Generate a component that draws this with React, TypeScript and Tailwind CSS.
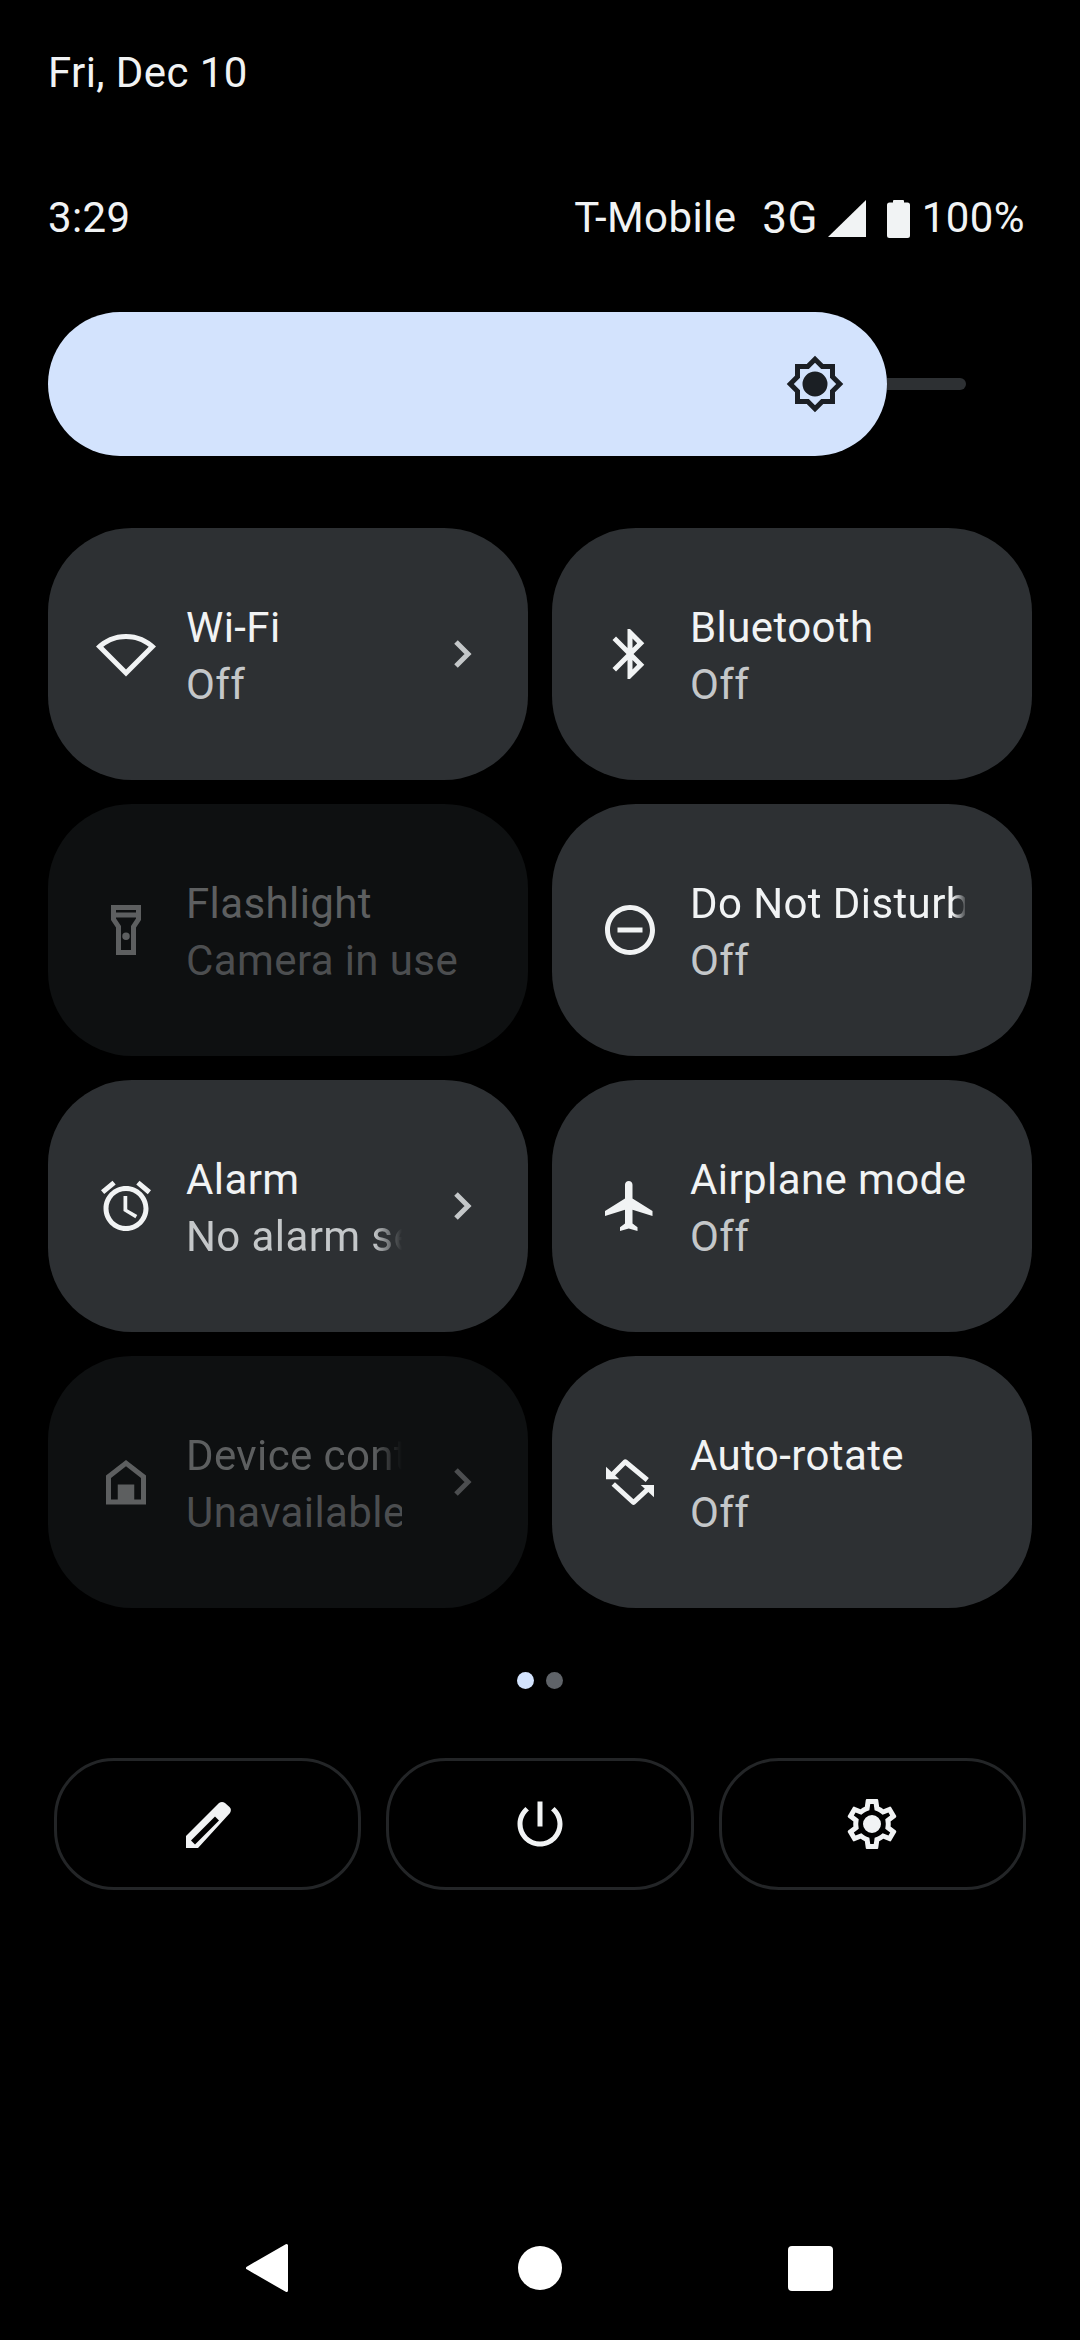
import React from "react";

const Ico = ({ d, cls, rule }: { d: string; cls: string; rule?: "evenodd" | "nonzero" }) => (
  <svg viewBox="0 0 24 24" className={`w-[60px] h-[60px] shrink-0 ${cls}`}>
    <path d={d} fill="currentColor" fillRule={rule ?? "nonzero"} />
  </svg>
);

const WIFI = "M12 6c3.33 0 6.49 1.08 9.08 3.07L12 18.17 2.92 9.07C5.51 7.08 8.67 6 12 6m0-2C7.31 4 3.07 5.9 0 8.98L12 21 24 8.98C20.93 5.9 16.69 4 12 4z";
const BT = "M17.71 7.71L12 2h-1v7.59L6.41 5 5 6.41 10.59 12 5 17.59 6.41 19 11 14.41V22h1l5.71-5.71-4.3-4.29 4.3-4.29zM13 5.83l1.88 1.88L13 9.59V5.83zm1.88 10.46L13 18.17v-3.76l1.88 1.88z";
const FLASH = "M18 2H6v6l2 3v11h8V11l2-3V2zm-2 2v1H8V4h8zm-2 6.4V20h-4v-9.61l-2-3V7h8v.39l-2 3.01zM12 13a1.5 1.5 0 100 3 1.5 1.5 0 000-3z";
const DND = "M7 11v2h10v-2H7zm5-9C6.48 2 2 6.48 2 12s4.48 10 10 10 10-4.48 10-10S17.52 2 12 2zm0 18c-4.41 0-8-3.59-8-8s3.59-8 8-8 8 3.59 8 8-3.59 8-8 8z";
const ALARM = "M22 5.72l-4.6-3.86-1.29 1.53 4.6 3.86L22 5.72zM7.88 3.39L6.6 1.86 2 5.71l1.29 1.53 4.59-3.85zM12.5 8H11v6l4.75 2.85.75-1.23-4-2.37V8zM12 4c-4.97 0-9 4.03-9 9s4.03 9 9 9c4.97 0 9-4.03 9-9s-4.03-9-9-9zm0 16c-3.87 0-7-3.13-7-7s3.13-7 7-7 7 3.13 7 7-3.13 7-7 7z";
const PLANE = "M21 16v-2l-8-5V3.5c0-.83-.67-1.5-1.5-1.5S10 2.67 10 3.5V9l-8 5v2l8-2.5V19l-2 1.5V22l3.5-1 3.5 1v-1.5L13 19v-5.5l8 2.5z";
const HOME = "M12 3.2L4 9.4V21h16V9.4L12 3.2zM12 5.7l6 4.7V19h-2.7v-6H8.7v6H6v-8.6l6-4.7z";
const EDIT = "M3.2 21.6V16.8L16.4 3.6Q17.6 2.8 18.8 3.6L20.6 5.2Q21.6 6.2 20.8 7.6L8 21.6ZM5.2 18.6L6.8 20.2L16.4 10.6L14.8 9Z";
const POWER = "M13 3h-2v10h2V3zm4.83 2.17l-1.42 1.42C17.99 7.86 19 9.81 19 12c0 3.87-3.13 7-7 7s-7-3.13-7-7c0-2.19 1.01-4.14 2.58-5.42L6.17 5.17C4.23 6.82 3 9.26 3 12c0 4.97 4.03 9 9 9s9-4.03 9-9c0-2.74-1.23-5.18-3.17-6.83z";
const GEAR = "M19.43 12.98c.04-.32.07-.64.07-.98 0-.34-.03-.66-.07-.98l2.11-1.65c.19-.15.24-.42.12-.64l-2-3.46c-.09-.16-.26-.25-.44-.25-.06 0-.12.01-.17.03l-2.49 1c-.52-.4-1.08-.73-1.69-.98l-.38-2.65C14.46 2.18 14.25 2 14 2h-4c-.25 0-.46.18-.49.42l-.38 2.65c-.61.25-1.17.59-1.69.98l-2.49-1c-.06-.02-.12-.03-.18-.03-.17 0-.34.09-.43.25l-2 3.46c-.13.22-.07.49.12.64l2.11 1.65c-.04.32-.07.65-.07.98 0 .33.03.66.07.98l-2.11 1.65c-.19.15-.24.42-.12.64l2 3.46c.09.16.26.25.44.25.06 0 .12-.01.17-.03l2.49-1c.52.4 1.08.73 1.69.98l.38 2.65c.03.24.24.42.49.42h4c.25 0 .46-.18.49-.42l.38-2.65c.61-.25 1.17-.59 1.69-.98l2.49 1c.06.02.12.03.18.03.17 0 .34-.09.43-.25l2-3.46c.12-.22.07-.49-.12-.64l-2.11-1.65zm-1.98-1.71c.04.31.05.52.05.73 0 .21-.02.43-.05.73l-.14 1.13.89.7 1.08.84-.7 1.21-1.27-.51-1.04-.42-.9.68c-.43.32-.84.56-1.25.73l-1.06.43-.16 1.13-.2 1.35h-1.4l-.19-1.35-.16-1.13-1.06-.43c-.43-.18-.83-.41-1.23-.71l-.91-.7-1.06.43-1.27.51-.7-1.21 1.08-.84.89-.7-.14-1.13c-.03-.31-.05-.54-.05-.74s.02-.43.05-.73l.14-1.13-.89-.7-1.08-.84.7-1.21 1.27.51 1.04.42.9-.68c.43-.32.84-.56 1.25-.73l1.06-.43.16-1.13.2-1.35h1.39l.19 1.35.16 1.13 1.06.43c.43.18.83.41 1.23.71l.91.7 1.06-.43 1.27-.51.7 1.21-1.07.85-.89.7.14 1.13zM12 8.4a3.6 3.6 0 100 7.2 3.6 3.6 0 000-7.2z";
const SUN = "M20 8.69V4h-4.69L12 .69 8.69 4H4v4.69L.69 12 4 15.31V20h4.69L12 23.31 15.31 20H20v-4.69L23.31 12 20 8.69zm-2 5.79V18h-3.52L12 20.48 9.52 18H6v-3.52L3.52 12 6 9.52V6h3.52L12 3.52 14.48 6H18v3.52L20.48 12 18 14.48zM12 7a5 5 0 100 10 5 5 0 000-10z";

const Rotate = () => (
  <svg viewBox="0 0 24 24" className="w-[60px] h-[60px] shrink-0 text-[#f1f3f4]">
    <path d="M5 9L10.1 3.9L18.9 11.2" fill="none" stroke="currentColor" strokeWidth="2" strokeLinejoin="round" />
    <path d="M19 15L13.4 20.2L5.3 12.8" fill="none" stroke="currentColor" strokeWidth="2" strokeLinejoin="round" />
    <path d="M2.4 5.9V10.9H7.7Z" fill="currentColor" />
    <path d="M21.6 18.1V13.2H16.3Z" fill="currentColor" />
  </svg>
);

const Chevron = ({ cls }: { cls: string }) => (
  <svg viewBox="0 0 24 36" className={`w-[24px] h-[36px] ml-[48px] shrink-0 ${cls}`}>
    <path d="M6 6L18 18L6 30" fill="none" stroke="currentColor" strokeWidth="5" />
  </svg>
);

type TileP = {
  icon: React.ReactNode;
  title: string;
  sub: string;
  dim?: boolean;
  chevron?: boolean;
  titleFade?: string;
  subFade?: string;
};

const Tile = ({ icon, title, sub, dim, chevron, titleFade, subFade }: TileP) => (
  <div className={`h-[252px] rounded-[84px] flex items-center pl-[48px] ${dim ? "bg-[#0e1011]" : "bg-[#2d3033]"}`}>
    {icon}
    <div className={`ml-[30px] shrink-0 text-[42px] leading-[57px] pt-[4px] ${chevron ? "w-[216px]" : "w-[275px]"}`}>
      <div className={`whitespace-nowrap overflow-hidden ${dim ? "text-[#5d5f60]" : "text-[#f1f3f4]"} ${titleFade ?? ""}`}>{title}</div>
      <div className={`whitespace-nowrap overflow-hidden ${dim ? "text-[#4c4e50]" : "text-[#c4c7c9]"} ${subFade ?? ""}`}>{sub}</div>
    </div>
    {chevron && <Chevron cls={dim ? "text-[#4c4e50]" : "text-[#c4c7c9]"} />}
  </div>
);

export default function App() {
  const on = "text-[#f1f3f4]";
  const off = "text-[#5d5f60]";
  return (
    <div className="w-[1080px] h-[2340px] bg-black flex flex-col overflow-hidden font-['Roboto',sans-serif] tracking-[0.4px] text-[#f1f3f4]">
      <div className="mt-[48px] ml-[48px] text-[42px] leading-[50px]">Fri, Dec 10</div>

      <div className="mt-[95px] mx-[48px] flex items-center text-[42px] leading-[50px]">
        <div>3:29</div>
        <div className="ml-auto flex items-center pr-[7px]">
          <span>T-Mobile</span>
          <span className="ml-[26px] text-[44px]">3G</span>
          <svg viewBox="0 0 38 37" className="w-[38px] h-[37px] ml-[10px]">
            <path d="M38 0V37H0Z" fill="currentColor" />
          </svg>
          <svg viewBox="0 0 23 39" className="w-[23px] h-[39px] ml-[21px]">
            <path d="M6 3.5V2a1 1 0 011-1h9a1 1 0 011 1v1.5h3.5a2.5 2.5 0 012.5 2.5v30.5a2.5 2.5 0 01-2.5 2.5h-18A2.5 2.5 0 010 36.5V6a2.5 2.5 0 012.5-2.5z" fill="currentColor" />
          </svg>
          <span className="ml-[12px]">100%</span>
        </div>
      </div>

      <div className="mt-[69px] ml-[48px] flex items-center">
        <div className="w-[839px] h-[144px] rounded-full bg-[#d3e3fd] flex items-center justify-end pr-[42px]">
          <Ico d={SUN} cls="text-[#1b1f24]" />
        </div>
        <div className="w-[79px] h-[12px] rounded-r-full bg-[#2d3033]" />
      </div>

      <div className="mt-[72px] mx-[48px] grid grid-cols-2 gap-[24px]">
        <Tile icon={<Ico d={WIFI} cls={on} />} title="Wi-Fi" sub="Off" chevron />
        <Tile icon={<Ico d={BT} cls={on} />} title="Bluetooth" sub="Off" />
        <Tile icon={<Ico d={FLASH} cls={off} />} title="Flashlight" sub="Camera in use" dim />
        <Tile
          icon={<Ico d={DND} cls={on} />}
          title="Do Not Disturb"
          sub="Off"
          titleFade="[mask-image:linear-gradient(to_right,black_262px,transparent_278px)]"
        />
        <Tile
          icon={<Ico d={ALARM} cls={on} />}
          title="Alarm"
          sub="No alarm set"
          chevron
          subFade="[mask-image:linear-gradient(to_right,black_188px,transparent_216px)]"
        />
        <Tile icon={<Ico d={PLANE} cls={on} />} title="Airplane mode" sub="Off" />
        <Tile
          icon={<Ico d={HOME} cls={off} />}
          title="Device controls"
          sub="Unavailable"
          dim
          chevron
          titleFade="[mask-image:linear-gradient(to_right,black_188px,transparent_216px)]"
        />
        <Tile icon={<Rotate />} title="Auto-rotate" sub="Off" />
      </div>

      <div className="mt-[64px] flex justify-center gap-[12px]">
        <div className="w-[17px] h-[17px] rounded-full bg-[#d3e3fd]" />
        <div className="w-[17px] h-[17px] rounded-full bg-[#5f6368]" />
      </div>

      <div className="mt-[69px] mx-[54px] grid grid-cols-3 gap-[25px]">
        {[EDIT, POWER, GEAR].map((d) => (
          <div key={d} className="h-[132px] rounded-[60px] border-[3px] border-[#232527] flex items-center justify-center">
            <Ico d={d} cls={on} rule="evenodd" />
          </div>
        ))}
      </div>

      <div className="mt-auto h-[144px] px-[135px] grid grid-cols-3 items-center justify-items-center">
        <svg viewBox="0 0 44 50" className="w-[44px] h-[50px] -translate-x-[3px]">
          <path d="M41.5 2.5V47.5L2.5 25Z" fill="#fff" stroke="#fff" strokeWidth="3" strokeLinejoin="round" />
        </svg>
        <div className="w-[44px] h-[44px] rounded-full bg-white" />
        <div className="w-[45px] h-[45px] rounded-[4px] bg-white" />
      </div>
    </div>
  );
}
